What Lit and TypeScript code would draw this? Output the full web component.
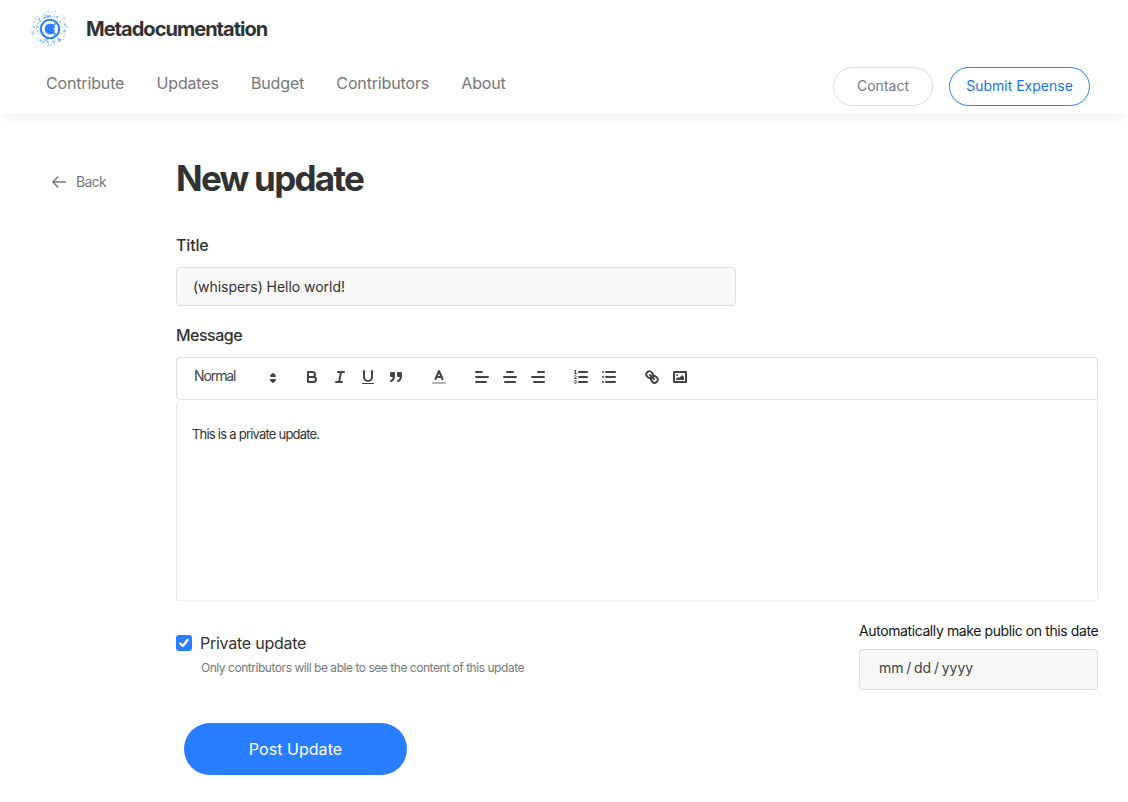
import { LitElement, html, css, svg } from "lit";
import { customElement } from "lit/decorators.js";

const icons: Record<string, unknown> = {
  bold: svg`<path d="M5,4H9.5A2.5,2.5,0,0,1,9.5,9H5Z"/><path d="M5,9h5.5A2.5,2.5,0,0,1,10.5,14H5Z"/>`,
  italic: svg`<path d="M7,4H13M5,14H11M8,14L10,4"/>`,
  underline: svg`<path d="M5,3V9a4,4,0,0,0,8,0V3"/><rect class="fill" x="3" y="15" width="12" height="1" rx=".5"/>`,
  quote: svg`<g class="both"><rect x="4" y="5" width="3" height="3"/><rect x="11" y="5" width="3" height="3"/><path d="M7,8c0,4.031-3,5-3,5"/><path d="M14,8c0,4.031-3,5-3,5"/></g>`,
  color: svg`<path opacity=".4" d="M3,15H15"/><path d="M5.5,11L9,3L12.5,11M11.63,9H6.38"/>`,
  left: svg`<path d="M3,9H15M3,14H13M3,4H9"/>`,
  center: svg`<path d="M3,9H15M4,14H14M6,4H12"/>`,
  right: svg`<path d="M3,9H15M5,14H15M9,4H15"/>`,
  ordered: svg`<path d="M7,4H15M7,9H15M7,14H15"/><path class="thin" d="M2.5,5.5H4.5"/><path class="fill" d="M3.5,6A0.5,0.5,0,0,1,3,5.5V3.085l-0.276.138A0.5,0.5,0,0,1,2.053,3c-0.124-.247-0.023-0.324.224-0.447l1-.5A0.5,0.5,0,0,1,4,2.5v3A0.5,0.5,0,0,1,3.5,6Z"/><path class="thin" d="M4.5,10.5h-2c0-.234,1.85-1.076,1.85-2.234A0.959,0.959,0,0,0,2.5,8.156"/><path class="thin" d="M2.5,14.846a0.959,0.959,0,0,0,1.85-.109A0.7,0.7,0,0,0,3.75,14a0.688,0.688,0,0,0,.6-0.736,0.959,0.959,0,0,0-1.85-.109"/>`,
  bullet: svg`<path d="M6,4H15M6,9H15M6,14H15M3,4H3M3,9H3M3,14H3"/>`,
  link: svg`<path d="M7,7L11,11"/><path d="M8.9,4.577a3.476,3.476,0,0,1,.36,4.679A3.476,3.476,0,0,1,4.577,8.9C3.185,7.5,2.035,6.4,4.217,4.217S7.5,3.185,8.9,4.577Z"/><path d="M13.423,9.1a3.476,3.476,0,0,0-4.679-.36,3.476,3.476,0,0,0,.36,4.679c1.392,1.392,2.5,2.542,4.679.36S14.815,10.5,13.423,9.1Z"/>`,
  image: svg`<rect x="3" y="4" width="12" height="10"/><circle class="fill" cx="6" cy="7" r="1"/><path class="fill" d="M5,12V11L7,9L8,10L11,7L13,9V12Z"/>`,
};
const groups = [
  ["bold", "italic", "underline", "quote"],
  ["color"],
  ["left", "center", "right"],
  ["ordered", "bullet"],
  ["link", "image"],
];

// Particles scattered round the logo ring, denser near it.
const noise = (n: number) => {
  const v = Math.sin(n * 127.1 + 11.7) * 43758.5453;
  return v - Math.floor(v);
};
const particles = Array.from({ length: 115 }, (_, i) => {
  const angle = noise(i) * Math.PI * 2;
  const r = 12 + noise(i + 500) * 7;
  return {
    x: Math.round(19 + Math.cos(angle) * r),
    y: Math.round(18.5 + Math.sin(angle) * r * 0.95),
    s: r < 16 && noise(i + 900) > 0.45 ? 2 : 1,
    o: 0.25 + noise(i + 1300) * 0.35,
  };
});

@customElement("app-root")
export class AppRoot extends LitElement {
  static styles = css`
    :host { display: block; height: 802px; background: #fff; color: #313233; font-family: Inter, "Liberation Sans", sans-serif; overflow: hidden; }
    * { box-sizing: border-box; }
    button, input { font-family: inherit; margin: 0; }
    header { height: 114px; box-shadow: 0 8px 12px -4px rgba(20, 20, 20, .065); }
    .brand { display: flex; align-items: center; height: 58px; padding-left: 30px; gap: 16px; }
    .logo { width: 40px; height: 40px; display: block; }
    .name { font-size: 20px; font-weight: 700; letter-spacing: -.97px; line-height: 28px; white-space: nowrap; }
    .bar { display: flex; justify-content: space-between; padding: 9px 38px 0 46px; }
    nav { display: flex; gap: 32.2px; padding-top: 4px; }
    nav a { font-size: 16px; line-height: 24px; color: #76777a; letter-spacing: -.15px; white-space: nowrap; }
    .actions { display: flex; gap: 16px; }
    .pill { height: 39px; border-radius: 20px; border: 1px solid #dcdee0; background: #fff; color: #76777a; font-size: 14px; letter-spacing: 0; padding: 0 0 2px; width: 100px; white-space: nowrap; }
    .pill.blue { width: 141px; border-color: #297eff; color: #1a6ff0; }
    main { display: flex; padding: 43px 30px 0 52px; }
    .back { display: flex; gap: 10px; width: 124px; padding-top: 15px; height: 40px; font-size: 14px; line-height: 20px; color: #76777a; letter-spacing: -.65px; }
    .back svg { width: 14px; height: 14px; margin-top: 3px; }
    .form { flex: 1; }
    h1 { margin: 0; font-size: 35px; line-height: 42px; font-weight: 700; letter-spacing: -1.75px; }
    .label { font-size: 16px; line-height: 24px; font-weight: 500; display: block; letter-spacing: -.5px; }
    .t1 { margin-top: 34px; letter-spacing: -.15px; }
    .field { display: block; border: 1px solid #dcdee0; border-radius: 4px; background: #f7f7f7; color: #313233; font-size: 14px; }
    .title { width: 560px; height: 39px; margin: 10px 0 17px; padding: 0 16px; letter-spacing: -.04px; }
    .toolbar { display: flex; height: 43px; margin-top: 10px; border: 1px solid #dcdee0; border-radius: 4px; border-bottom-color: #e6e6e8; padding: 8px 0 0 17px; color: #444; }
    .picker { display: flex; justify-content: space-between; width: 88.3px; margin-right: 15.3px; font-size: 14px; line-height: 20px; font-weight: 400; letter-spacing: -1.1px; }
    .picker svg { margin-top: 2.5px; }
    .group { display: flex; margin-right: 14.6px; padding-top: 2.4px; }
    .tool { width: 28.2px; height: 18px; display: flex; justify-content: center; }
    .glyph { width: 18px; height: 18px; fill: none; stroke: #444; stroke-width: 2; stroke-linecap: round; stroke-linejoin: round; }
    .glyph .fill { fill: #444; stroke: none; }
    .glyph .both { fill: #444; }
    .glyph .thin { stroke-width: 1; }
    .editor { height: 201px; border: 1px solid #e8e9eb; border-bottom-color: #efeff0; border-top: 0; border-radius: 4px; padding: 23px 15px; font-size: 13px; line-height: 22px; letter-spacing: -.82px; word-spacing: .2px; }
    .options { display: flex; justify-content: space-between; }
    .private { padding-top: 29px; }
    .check { display: flex; align-items: center; gap: 8px; height: 25px; font-size: 16px; line-height: 24px; letter-spacing: -.25px; }
    .box { width: 16px; height: 16px; border-radius: 3px; background: #297eff; }
    .box path { fill: none; stroke: #fff; stroke-width: 2.4; stroke-linecap: round; stroke-linejoin: round; }
    .hint { padding-left: 25px; font-size: 12px; line-height: 18px; margin-top: 4px; color: #76777a; letter-spacing: -.46px; white-space: nowrap; }
    .public { width: 239px; padding-top: 20px; }
    .datelabel { display: block; font-size: 14px; line-height: 20px; color: #141414; letter-spacing: -.4px; white-space: nowrap; }
    .date { height: 41px; margin-top: 8px; padding: 0 19px; line-height: 36px; letter-spacing: -.07px; word-spacing: -1px; color: #444; }
    .post { display: block; width: 223px; height: 52px; margin: 33px 0 0 8px; border: 0; border-radius: 26px; background: #297eff; color: #fff; font-size: 16px; letter-spacing: .05px; padding: 0; }
  `;

  glyph(content: unknown) {
    return html`<svg class="glyph" viewBox="0 0 18 18">${content}</svg>`;
  }

  render() {
    return html`
      <header>
        <div class="brand">
          <svg class="logo" viewBox="0 0 40 40">
            ${particles.map((p) => svg`<rect x=${p.x} y=${p.y} width=${p.s} height=${p.s} fill="#4c9dff" opacity=${p.o} />`)}
            <circle cx="20" cy="20" r="9.2" fill="#fff" stroke="#297eff" stroke-width="2.1" />
            <circle cx="20" cy="20" r="5.4" fill="#297eff" />
            <path d="M26.2,17.2L23.4,20L26.2,22.8Z" fill="#fff" />
            <path d="M23.2,16.6l2.2-2.3M23.2,23.4l2.2,2.3" stroke="#297eff" stroke-width="1.8" />
          </svg>
          <span class="name">Metadocumentation</span>
        </div>
        <div class="bar">
          <nav>${["Contribute", "Updates", "Budget", "Contributors", "About"].map((t) => html`<a>${t}</a>`)}</nav>
          <div class="actions"><button class="pill">Contact</button><button class="pill blue">Submit Expense</button></div>
        </div>
      </header>
      <main>
        <a class="back"><svg viewBox="0 0 14 14" fill="none" stroke="#76777a" stroke-width="1.4"><path d="M14,7H1M6.2,1.6L.9,7L6.2,12.4" /></svg>Back</a>
        <div class="form">
          <h1>New update</h1>
          <label class="label t1">Title</label>
          <input class="field title" .value=${"(whispers) Hello world!"} />
          <label class="label">Message</label>
          <div class="toolbar">
            <div class="picker"><span>Normal</span>${this.glyph(svg`<path class="both" d="M7,11L9,13L11,11Z"/><path class="both" d="M7,7L9,5L11,7Z"/>`)}</div>
            ${groups.map((g) => html`<div class="group">${g.map((n) => html`<span class="tool">${this.glyph(icons[n])}</span>`)}</div>`)}
          </div>
          <div class="editor">This is a private update.</div>
          <div class="options">
            <div class="private">
              <div class="check"><svg class="box" viewBox="0 0 16 16"><path d="M4.3,8.5L6.8,11L11.5,5" /></svg>Private update</div>
              <div class="hint">Only contributors will be able to see the content of this update</div>
            </div>
            <div class="public">
              <span class="datelabel">Automatically make public on this date</span>
              <div class="field date">mm / dd / yyyy</div>
            </div>
          </div>
          <button class="post">Post Update</button>
        </div>
      </main>
    `;
  }
}
